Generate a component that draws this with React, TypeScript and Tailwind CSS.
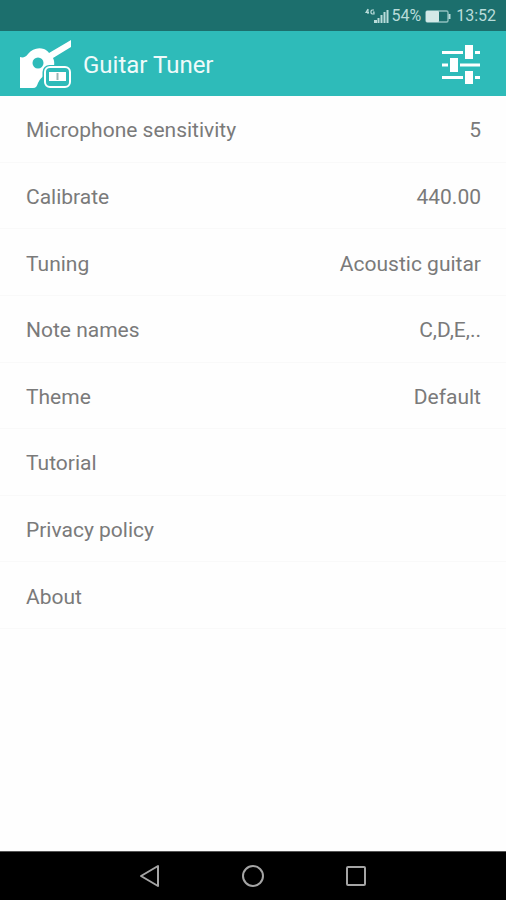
type Setting = { label: string; value?: string };

const settings: Setting[] = [
  { label: "Microphone sensitivity", value: "5" },
  { label: "Calibrate", value: "440.00" },
  { label: "Tuning", value: "Acoustic guitar" },
  { label: "Note names", value: "C,D,E,.." },
  { label: "Theme", value: "Default" },
  { label: "Tutorial" },
  { label: "Privacy policy" },
  { label: "About" },
];

function StatusBar() {
  return (
    <div className="flex h-[31px] items-center justify-end bg-[#1c6f6d] pr-[10px] pt-px text-[16px] leading-5 text-[#b9dcda]">
      <svg className="mr-[2px] h-4 w-6" viewBox="0 0 24 16" fill="none" aria-hidden="true">
        <path d="M3 1v5M3 1L1 4.5h3M9 2H7L6 3v2l1 1h2V4H8" stroke="#b9dcda" strokeWidth="1.2" />
        <path d="M9 12h3v3H9zM12.500 10h2v5h-2zM15.500 7h2v8h-2zM18.500 4h2v11h-2zM21.500 2h2v13h-2z" fill="#b9dcda" />
      </svg>
      <span>54%</span>
      <svg className="ml-1 mr-[5px] h-[13px] w-[26px]" viewBox="0 0 26 13" fill="none" aria-hidden="true">
        <rect x="1" y="1" width="22" height="11" rx="1.5" stroke="#8fc0be" strokeWidth="1.4" />
        <rect x="1" y="1" width="13" height="11" rx="1" fill="#d3e9e7" />
        <path d="M24.500 4v5" stroke="#b9dcda" strokeWidth="2" />
      </svg>
      <span>13:52</span>
    </div>
  );
}

function GuitarLogo() {
  return (
    <svg className="h-[50px] w-[52px]" viewBox="0 0 52 50" aria-hidden="true">
      <path
        fill="white"
        d="M0 17c3 1 6 0 8-3 4-5 10-7 16-5 2 1 4 2 5 4L46 3l5-3v7L33 18c2 4 1 7 1 10-6 0-9 3-9 7-3 2-5 4-7 8-1 3-2 5-5 5H0z"
      />
      <circle cx="18" cy="23" r="5.5" fill="#2ebbb9" />
      <rect x="22.5" y="25" width="30" height="25" rx="7" fill="#2ebbb9" />
      <rect x="25" y="27" width="25" height="20" rx="5" fill="#2ebbb9" stroke="white" strokeWidth="2" />
      <path d="M29 32h17v9H29z" fill="white" />
      <path d="M37.500 33v7" stroke="#9bb5b4" strokeWidth="2" />
    </svg>
  );
}

function SlidersIcon() {
  return (
    <svg className="h-10 w-[38px]" viewBox="0 0 38 40" fill="white" aria-hidden="true">
      <path d="M0 6h21v3H0zM33 6h5v3h-5zM23 0h8v14h-8z" />
      <path d="M0 18.500h6v3H0zM18 18.500h20v3H18zM8 13h8v14H8z" />
      <path d="M0 31h21v3H0zM33 31h5v3h-5zM23 26h8v13h-8z" />
    </svg>
  );
}

export default function App() {
  return (
    <div className="flex min-h-screen flex-col bg-[#fefefe] font-[Roboto,sans-serif]">
      <StatusBar />
      <header className="flex h-[65px] items-center bg-[#2ebbb9] pl-5 pr-[26px] pt-[3px]">
        <GuitarLogo />
        <h1 className="ml-[11px] flex-1 text-2xl text-[#effafa]">Guitar Tuner</h1>
        <button type="button" aria-label="Settings">
          <SlidersIcon />
        </button>
      </header>
      <main className="flex-1">
        <ul className="grid min-h-[533px] auto-rows-fr">
          {settings.map(({ label, value }) => (
            <li key={label} className="flex border-b border-[#f9f9f9]">
              <button
                type="button"
                className="flex w-full items-center justify-between pl-[26px] pr-[25px] pt-[3px] text-left text-[21px] leading-7 text-[#7a7a7a]"
              >
                <span>{label}</span>
                {value && <span>{value}</span>}
              </button>
            </li>
          ))}
        </ul>
      </main>
      <nav className="flex h-[49px] items-center justify-center gap-[79px] border-t border-[#555555] bg-black">
        <button type="button" aria-label="Back">
          <svg className="size-6" viewBox="0 0 24 24" fill="none" stroke="#a5a5a5" strokeWidth="2" strokeLinejoin="round" aria-hidden="true">
            <path d="M20 2v20L3 12z" />
          </svg>
        </button>
        <button type="button" aria-label="Home">
          <svg className="size-6" viewBox="0 0 24 24" fill="none" stroke="#a5a5a5" strokeWidth="2" aria-hidden="true">
            <circle cx="12" cy="12" r="10" />
          </svg>
        </button>
        <button type="button" aria-label="Recent apps">
          <svg className="size-6" viewBox="0 0 24 24" fill="none" stroke="#a5a5a5" strokeWidth="2" aria-hidden="true">
            <rect x="3" y="3" width="18" height="18" rx="1" />
          </svg>
        </button>
      </nav>
    </div>
  );
}
